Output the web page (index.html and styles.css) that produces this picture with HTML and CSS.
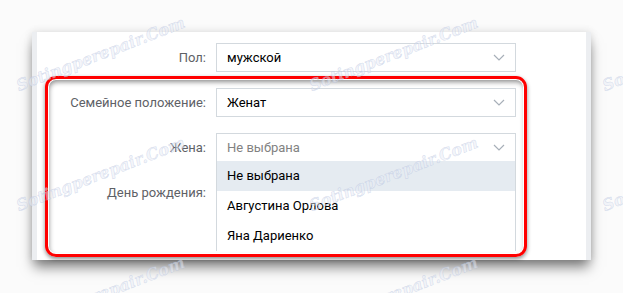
FILE: index.html
```html
<!DOCTYPE html>
<html lang="ru">
<head>
    <meta charset="UTF-8">
    <meta name="viewport" content="width=device-width, initial-scale=1.0">
    <title>Семейное положение</title>
    <link rel="stylesheet" href="styles.css">
</head>
<body>

<div class="card">
    <div class="form">
        <div class="row">
            <label class="label">Пол:</label>
            <div class="select">
                <span class="value">мужской</span>
                <svg class="chevron" width="12" height="7" viewBox="0 0 12 7"><polyline points="1,1 6,6 11,1"/></svg>
            </div>
        </div>
        <div class="row">
            <label class="label">Семейное положение:</label>
            <div class="select">
                <span class="value">Женат</span>
                <svg class="chevron" width="12" height="7" viewBox="0 0 12 7"><polyline points="1,1 6,6 11,1"/></svg>
            </div>
        </div>
        <div class="row">
            <label class="label">Жена:</label>
            <div class="select open">
                <span class="value placeholder">Не выбрана</span>
                <svg class="chevron" width="12" height="7" viewBox="0 0 12 7"><polyline points="1,1 6,6 11,1"/></svg>
                <ul class="dropdown">
                    <li class="option active">Не выбрана</li>
                    <li class="option">Августина Орлова</li>
                    <li class="option">Яна Дариенко</li>
                </ul>
            </div>
        </div>
        <div class="row">
            <label class="label">День рождения:</label>
            <div class="select"></div>
        </div>
    </div>
</div>

<div class="highlight"></div>

<div class="watermarks">
    <span class="wm" style="left: 20px; top: 94px;">Sotingperepair.Com</span>
    <span class="wm" style="left: 313px; top: 94px;">Sotingperepair.Com</span>
    <span class="wm" style="left: 606px; top: 94px;">Sotingperepair.Com</span>
    <span class="wm" style="left: 20px; top: 214px;">Sotingperepair.Com</span>
    <span class="wm" style="left: 313px; top: 214px;">Sotingperepair.Com</span>
    <span class="wm" style="left: 606px; top: 214px;">Sotingperepair.Com</span>
    <span class="wm" style="left: 20px; top: 334px;">Sotingperepair.Com</span>
    <span class="wm" style="left: 313px; top: 334px;">Sotingperepair.Com</span>
</div>

</body>
</html>
```

FILE: styles.css
```css
html, body {
    margin: 0;
    height: 100%;
}
body {
    font-family: Roboto, "Open Sans", Arial, sans-serif;
    font-size: 13px;
    background-color: #fbfbfb;
    overflow: hidden;
}
.card {
    margin: 32px 0 0 32px;
    width: 559px;
    height: 228px;
    box-sizing: border-box;
    background-color: #fff;
    border-left: 5px solid #eceef1;
    border-right: 5px solid #eceef1;
    box-shadow: 0 9px 12px -2px rgba(0, 0, 0, 0.5), 0 0 8px rgba(0, 0, 0, 0.12);
}
.form {
    display: flex;
    flex-direction: column;
    gap: 16px;
    padding-top: 11px;
}
.row {
    display: grid;
    grid-template-columns: 169px 300px;
    column-gap: 10px;
    align-items: center;
    height: 29px;
}
.label {
    text-align: right;
    color: #5e6166;
}
.select {
    position: relative;
    height: 29px;
    box-sizing: border-box;
    border: 1px solid #d3d9de;
    padding: 0 10px;
    display: flex;
    align-items: center;
    justify-content: space-between;
    background-color: #fff;
}
.value {
    color: #000;
}
.placeholder {
    color: #828282;
}
.chevron {
    fill: none;
    stroke: #a7afb8;
    stroke-width: 1.2;
}
.dropdown {
    position: absolute;
    top: 100%;
    left: -1px;
    width: 300px;
    margin: 0;
    padding: 0;
    list-style: none;
    box-sizing: border-box;
    border: 1px solid #d3d9de;
    border-top: none;
    border-bottom: none;
    background-color: #fff;
    z-index: 2;
}
.option {
    height: 30px;
    line-height: 30px;
    padding-left: 10px;
    color: #000;
}
.option.active {
    background-color: #e5ebf1;
}
.highlight {
    position: absolute;
    left: 45px;
    top: 76px;
    width: 482px;
    height: 181px;
    box-sizing: border-box;
    border: 3px solid #ff0000;
    border-radius: 11px;
    box-shadow: inset 0 0 0 1px #fff, inset 1px 3px 5px rgba(0, 0, 0, 0.45), 0 2px 4px rgba(0, 0, 0, 0.45);
    z-index: 3;
}
.watermarks {
    position: absolute;
    inset: 0;
    pointer-events: none;
    z-index: 4;
}
.wm {
    position: absolute;
    transform: rotate(-21deg);
    transform-origin: left bottom;
    font-family: "DejaVu Serif", serif;
    font-style: italic;
    font-weight: bold;
    font-size: 16px;
    line-height: 1;
    white-space: nowrap;
    color: rgba(232, 236, 246, 0.5);
    -webkit-text-stroke: 0.5px rgba(165, 180, 215, 0.45);
    margin-top: -16px;
}
```
